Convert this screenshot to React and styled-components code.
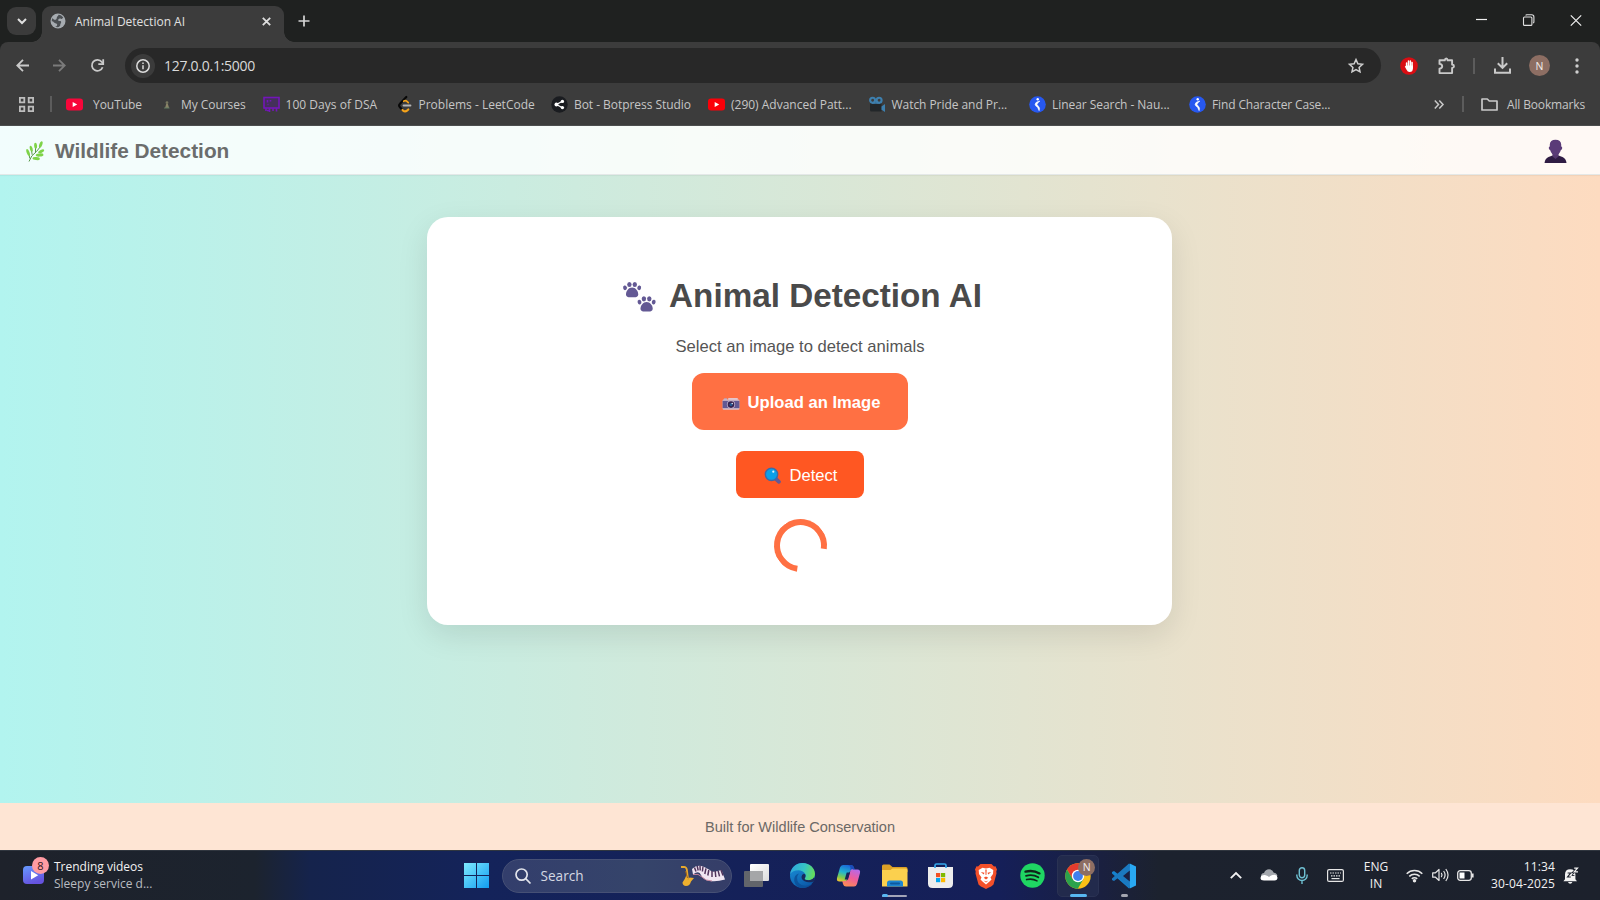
import React from 'react';
import styled, { createGlobalStyle } from 'styled-components';

const GlobalStyle = createGlobalStyle`
  * { box-sizing: border-box; }
  html, body { margin: 0; padding: 0; }
  body { width: 1600px; height: 900px; overflow: hidden; background: #1f2020; }
  svg { display: block; flex: none; overflow: visible; }
`;

const uiFont = '"Open Sans", "Noto Sans", sans-serif';
const pageFont = '"Liberation Sans", Arial, sans-serif';

const Screen = styled.div`
  display: flex;
  flex-direction: column;
  width: 1600px;
  height: 900px;
  overflow: hidden;
`;

/* ---------- Browser chrome ---------- */

const Browser = styled.div`
  display: flex;
  flex-direction: column;
  height: 126px;
  flex: none;
  background: #1f2120;
  font-family: ${uiFont};
  color: #c9c9c9;
`;

const TabStrip = styled.div`
  display: flex;
  align-items: flex-start;
  height: 42px;
  padding: 6px 0 0 7px;
`;

const TabMenuButton = styled.div`
  display: flex;
  align-items: center;
  justify-content: center;
  width: 29px;
  height: 28px;
  margin-top: 1px;
  border-radius: 9px;
  background: #3b3b3b;
`;

const Tab = styled.div`
  position: relative;
  display: flex;
  align-items: center;
  width: 242px;
  height: 36px;
  margin-left: 6px;
  padding: 0 13px 6px 8px;
  border-radius: 9px 9px 0 0;
  background: #3c3c3c;

  &::before,
  &::after {
    content: '';
    position: absolute;
    bottom: 0;
    width: 10px;
    height: 10px;
  }
  &::before {
    left: -10px;
    background: radial-gradient(circle at 0 0, transparent 9.5px, #3c3c3c 10px);
  }
  &::after {
    right: -10px;
    background: radial-gradient(circle at 100% 0, transparent 9.5px, #3c3c3c 10px);
  }
`;

const TabTitle = styled.span`
  flex: 1;
  margin-left: 9px;
  padding-top: 1px;
  font-size: 12px;
  line-height: 18px;
  color: #e0e0e0;
`;

const NewTab = styled.div`
  margin: 9px 0 0 14px;
`;

const WindowControls = styled.div`
  display: flex;
  align-items: center;
  gap: 35px;
  height: 28px;
  margin-left: auto;
  padding-right: 18px;
`;

const Panel = styled.div`
  flex: 1;
  border-radius: 8px 8px 0 0;
  border-bottom: 1px solid #4c4e4e;
  background: #3c3c3c;
`;

const Toolbar = styled.div`
  display: flex;
  align-items: center;
  height: 47px;
  padding: 0 9px 0 8px;
`;

const ToolButton = styled.div`
  display: flex;
  align-items: center;
  justify-content: center;
  width: 28px;
  height: 28px;
  margin-left: ${(p) => p.$gap || 0}px;
`;

const AddressBar = styled.div`
  display: flex;
  align-items: center;
  flex: 1;
  height: 35px;
  margin-left: 14px;
  padding: 0 17px 0 6px;
  border-radius: 18px;
  background: #282828;
`;

const SiteInfo = styled.div`
  display: flex;
  align-items: center;
  justify-content: center;
  width: 24px;
  height: 24px;
  border-radius: 50%;
  background: #3b3b3b;
`;

const Url = styled.span`
  flex: 1;
  margin-left: 9px;
  font-size: 14px;
  letter-spacing: -0.27px;
  color: #dadada;
`;

const Divider = styled.div`
  width: 2px;
  height: 16px;
  margin-left: ${(p) => p.$gap}px;
  background: #5c5c5c;
`;

const Avatar = styled.div`
  display: flex;
  align-items: center;
  justify-content: center;
  width: ${(p) => p.$size}px;
  height: ${(p) => p.$size}px;
  border-radius: 50%;
  background: #8d6e63;
  color: #f4eeec;
  font-family: ${uiFont};
  font-size: 10.5px;
`;

const BookmarkBar = styled.div`
  display: flex;
  align-items: center;
  height: 30px;
  padding: 0 15px 0 18px;
`;

const BookmarkList = styled.div`
  display: flex;
  flex: 1;
  margin-left: 14px;
`;

const Bookmark = styled.div`
  display: flex;
  align-items: center;
  gap: ${(p) => p.$gap}px;
  width: ${(p) => p.$width}px;
`;

const BookmarkLabel = styled.span`
  padding-top: 1px;
  font-size: 12px;
  line-height: 17px;
  letter-spacing: ${(p) => p.$spacing ?? -0.05}px;
  white-space: nowrap;
  color: #c6c6c6;
`;

const AllBookmarks = styled.div`
  display: flex;
  align-items: center;
  gap: 9px;
  margin-left: 17px;
`;

/* ---------- Web page ---------- */

const Page = styled.div`
  display: flex;
  flex-direction: column;
  height: 724px;
  flex: none;
  background: linear-gradient(to right, #b2f4ef, #fddbc0);
  font-family: ${pageFont};
`;

const PageHeader = styled.header`
  display: flex;
  align-items: center;
  justify-content: space-between;
  height: 49px;
  padding: 0 33px 0 26px;
  border-bottom: 1px solid rgba(225, 230, 229, 0.9);
  background: rgba(255, 255, 255, 0.83);
  box-shadow: 0 1px 1px rgba(0, 0, 0, 0.04);
`;

const Brand = styled.div`
  display: flex;
  align-items: center;
  gap: 10px;
  padding-top: 2px;
  font-size: 20.8px;
  font-weight: 700;
  line-height: 24px;
  color: #6b6d6c;
`;

const UserMenu = styled.div`
  padding-top: 1px;
`;

const Main = styled.main`
  display: flex;
  justify-content: center;
  align-items: flex-start;
  flex: 1;
  padding: 42px 1px 0 0;
`;

const Card = styled.section`
  display: flex;
  flex-direction: column;
  align-items: center;
  width: 745px;
  height: 408px;
  padding: 56px 0 0 1px;
  border-radius: 21px;
  background: #fff;
  box-shadow: 0 10px 31px rgba(0, 0, 0, 0.1);
`;

const Title = styled.h1`
  display: flex;
  align-items: center;
  gap: 13px;
  height: 46px;
  margin: 0;
  padding-left: 5px;
  font-size: 33.25px;
  color: #4a4a4a;
`;

const TitleIcon = styled.span`
  padding-top: 2px;
`;

const Hint = styled.p`
  height: 22px;
  margin: 17px 0 0;
  font-size: 16.6px;
  line-height: 22px;
  color: #555;
`;

const ActionButton = styled.button`
  display: flex;
  align-items: center;
  justify-content: center;
  gap: 8px;
  border: 0;
  font-family: inherit;
  font-size: 16.6px;
  color: #fff;
`;

const UploadButton = styled(ActionButton)`
  width: 216px;
  height: 57px;
  margin-top: 15px;
  padding: 2px 0 0 2px;
  border-radius: 12px;
  background: #ff7043;
  font-weight: 700;
`;

const DetectButton = styled(ActionButton)`
  width: 128px;
  height: 47px;
  margin-top: 21px;
  padding: 2px 0 0 1px;
  border-radius: 8px;
  background: #ff5722;
`;

const Spinner = styled.div`
  width: 53px;
  height: 53px;
  margin-top: 21px;
  border: 6px solid #ff7043;
  border-right-color: transparent;
  border-radius: 50%;
  transform: rotate(53deg);
`;

const PageFooter = styled.footer`
  display: flex;
  align-items: center;
  justify-content: center;
  height: 47px;
  background: #fee5d4;
  font-size: 14.55px;
  color: #6c6966;
`;

/* ---------- Taskbar ---------- */

const Taskbar = styled.div`
  display: flex;
  align-items: center;
  height: 50px;
  flex: none;
  padding: 0 21px 0 22px;
  border-top: 1px solid #30363f;
  background: linear-gradient(to right, #1e222b 0, #1c232e 255px, #15234c 310px, #14235a 480px, #151f58 1000px, #1a2040 1100px, #1c222e 1160px, #1c212c 100%);
  font-family: ${uiFont};
  font-size: 12px;
  color: #f2f2f2;
`;

const Widget = styled.div`
  display: flex;
  align-items: center;
  gap: 9px;
  width: 431px;
`;

const WidgetIcon = styled.div`
  position: relative;
  width: 23px;
  height: 26px;
  padding: 3px 0 0 1px;
`;

const WidgetBadge = styled.div`
  position: absolute;
  left: 10px;
  top: -6px;
  width: 17px;
  height: 17px;
  border-radius: 50%;
  background: #ff9ba3;
  color: #33171b;
  font-size: 11px;
  line-height: 17px;
  text-align: center;
`;

const TwoLines = styled.div`
  display: flex;
  flex-direction: column;
  align-items: ${(p) => p.$align || 'flex-start'};
  width: ${(p) => (p.$width ? `${p.$width}px` : 'auto')};
  margin-left: ${(p) => p.$gap || 0}px;
  padding-bottom: 2px;
  line-height: 17px;
  letter-spacing: ${(p) => p.$spacing || 0}px;
  white-space: nowrap;
`;

const Muted = styled.span`
  color: #b9bcc1;
`;

const StartButton = styled.div`
  width: 46px;
  display: flex;
  justify-content: center;
`;

const SearchBox = styled.div`
  display: flex;
  align-items: center;
  width: 230px;
  height: 34px;
  margin: 0 2.5px;
  padding: 0 5px 0 12px;
  border: 1px solid #465075;
  border-radius: 17px;
  background: linear-gradient(to right, #333e6c, #35446a 60%, #353d68);
`;

const SearchLabel = styled.span`
  flex: 1;
  margin-left: 10px;
  font-size: 13.6px;
  color: #d5d8e2;
`;

const AppSlot = styled.div`
  position: relative;
  display: flex;
  align-items: center;
  justify-content: center;
  width: 45.9px;
  height: 44px;
`;

const ActiveTile = styled.div`
  position: relative;
  display: flex;
  align-items: center;
  justify-content: center;
  width: 42px;
  height: 42px;
  border: 1px solid #2a3253;
  border-radius: 5px;
  background: #222a4c;
`;

const AppBadge = styled.div`
  position: absolute;
  right: 3px;
  top: 3px;
`;

const Indicator = styled.div`
  position: absolute;
  bottom: 1px;
  left: 50%;
  width: ${(p) => p.$width}px;
  height: ${(p) => p.$height || 3}px;
  margin-left: ${(p) => -p.$width / 2 + (p.$shift || 0)}px;
  border-radius: 2px;
  background: ${(p) => p.$color};
`;

const Tray = styled.div`
  display: flex;
  align-items: center;
  margin-left: auto;
`;

const TrayIcon = styled.div`
  display: flex;
  align-items: center;
  justify-content: ${(p) => (p.$end ? 'flex-end' : 'center')};
  width: ${(p) => p.$width}px;
  padding-bottom: 1px;
`;

/* ---------- Icons ---------- */

const Stroke = ({ w = 16, h = w, box, color = '#c9c9c9', sw = 1.8, children, ...rest }) => (
  <svg width={w} height={h} viewBox={box || `0 0 ${w} ${h}`} fill="none" stroke={color} strokeWidth={sw} {...rest}>
    {children}
  </svg>
);

const Globe = () => (
  <svg width="16" height="16" viewBox="0 0 16 16">
    <circle cx="8" cy="8" r="7.500" fill="#a6abb0" />
    <path d="M8.500 1.800C10.500 2 12 2.800 13.200 4.600c-.8 1.300-1.700 1.500-2.300 1.100-.9-.6-2-.3-2.600.7-.6 1 .5 1.500 1.600 1.500 1 0 1.500.6 1.200 1.600-.3 1.200-1.100 1.900-.9 3.200l-1.500 1.300Q6.500 14.400 5 13.700c1.700-.2 2.300-1 2.200-2.200-.1-1.400-2.200-1.100-3.200-2.100C3.200 8.500 2.600 8.300 1.700 8.300 1.700 7 2 5.900 2.600 5c.5 1.300 1.800 2 3 1.700 1.300-.3 1-1.600 1.300-2.500.3-.9 1.500-1 1.600-2.400z" fill="#4a4e52" />
  </svg>
);

const YouTube = ({ color }) => (
  <svg width="17" height="17" viewBox="0 0 17 17">
    <rect x="0" y="2.500" width="17" height="12" rx="3" fill={color} />
    <path d="M6.700 6v5l4.500-2.500z" fill="#fff" />
  </svg>
);

const Courses = () => (
  <svg width="17" height="17" viewBox="0 0 17 17">
    <circle cx="9" cy="6.700" r="1.400" fill="#77775f" />
    <path d="M7 12l1.200-4h1.700l1.200 4z" fill="#8a8468" />
    <path d="M6 12h5.500" stroke="#5f7a61" />
  </svg>
);

const DsaBoard = () => (
  <svg width="17" height="17" viewBox="0 0 17 17" fill="none" stroke="#7316b8" strokeWidth="1.600">
    <rect x="1" y="1.500" width="15" height="10.500" fill="#44305a" />
    <path d="M4.500 4v2.500M4.500 8.500h1M7.500 4v1.500M3 12v3M6.500 12v4M10 12v3M13.500 12v3.500M4 14.500h3" />
  </svg>
);

const LeetCode = () => (
  <svg width="17" height="17" viewBox="0 0 17 17" fill="none" strokeWidth="2.200" strokeLinecap="round">
    <path d="M9.300 1L3 7.800Q1.200 9.500 3 11.300L5 13.400" stroke="#080808" />
    <path d="M5.500 14l.5.500q2 1.800 4 .2l1.300-1.200" stroke="#f5a31a" />
    <path d="M6.700 5.200q1.700-1.200 3.300.2l1.300 1.200" stroke="#f5a31a" strokeWidth="1.600" />
    <path d="M6.500 9.500h7" stroke="#b5b5b5" strokeWidth="1.800" />
  </svg>
);

const Botpress = () => (
  <svg width="17" height="17" viewBox="0 0 17 17">
    <circle cx="8.500" cy="8.500" r="8.200" fill="#1a1c20" />
    <path d="M11.500 5.300L5.500 8.500l6 3.200" stroke="#fff" strokeWidth="1.300" fill="none" />
    <circle cx="5.400" cy="8.500" r="1.900" fill="#fff" />
    <circle cx="11.400" cy="5.400" r="1.700" fill="#fff" />
    <circle cx="11.400" cy="11.600" r="1.700" fill="#fff" />
  </svg>
);

const MovieCamera = () => (
  <svg width="17" height="17" viewBox="0 0 17 17">
    <path d="M1 7.500h11.500v8H2.500Q1 15.500 1 14z" fill="#222629" />
    <path d="M12.500 10.500L16 8v8l-3.500-2.300z" fill="#3d7fae" />
    <path d="M3 7h8" stroke="#3d7fae" strokeWidth="1.500" />
    <g fill="none" stroke="#3d7fae" strokeWidth="2.100">
      <circle cx="3.600" cy="4.300" r="2.500" />
      <circle cx="10.100" cy="4.300" r="2.500" />
    </g>
  </svg>
);

const Naukri = () => (
  <svg width="17" height="17" viewBox="0 0 17 17">
    <circle cx="8.500" cy="8.500" r="8.300" fill="#2758f0" />
    <circle cx="8.700" cy="3.300" r="1.200" fill="#fff" />
    <path d="M11 5Q6.200 5.800 6 8.300q.3 1.800 2.500 2.900l1.600 3.500q1.300-2.700-.7-4.500L8 8.500q.5-1.600 3-3.500z" fill="#fff" stroke="#fff" strokeWidth=".5" />
  </svg>
);

const Leaf = () => (
  <svg width="19" height="21" viewBox="0 0 19 21">
    <path d="M3 20.500Q4.800 14.500 10.500 10.500L14.500 5.500M3.800 17.500L3 13.500M6.200 13.800L5.500 9.500M9.500 11L9.500 6" stroke="#5a9a4c" strokeWidth="1" fill="none" />
    <g fill="#7ed348">
      <ellipse cx="14.800" cy="3.500" rx="1.500" ry="3.400" transform="rotate(20 14.800 3.500)" />
      <ellipse cx="9.600" cy="4.800" rx="1.500" ry="3" transform="rotate(-5 9.600 4.800)" />
      <ellipse cx="5.200" cy="7.700" rx="1.400" ry="3.100" transform="rotate(-16 5.200 7.700)" />
      <ellipse cx="2.100" cy="11.500" rx="1.400" ry="3.700" transform="rotate(-20 2.100 11.500)" />
      <ellipse cx="15.200" cy="10.300" rx="3.300" ry="1.500" transform="rotate(-25 15.200 10.300)" />
      <ellipse cx="13.600" cy="14" rx="3.900" ry="1.600" transform="rotate(-4 13.600 14)" />
      <ellipse cx="10.200" cy="17.600" rx="3.700" ry="1.500" transform="rotate(5 10.200 17.600)" />
    </g>
  </svg>
);

const Person = () => (
  <svg width="23" height="24" viewBox="0 0 23 24">
    <path d="M.5 24Q1 19.500 4.500 18l4-1.500h6l4 1.500q3.500 1.500 4 6z" fill="#2f1c44" />
    <path d="M8.500 14h6v3.500L11.500 20l-3-2.500z" fill="#54376f" />
    <path d="M5.800 5.500Q6 .7 11.500.7t5.700 4.800v2q1.200 0 1 1.800-.2 1.500-1.300 1.700-1.600 5.200-5.400 5.600-3.800-.4-5.400-5.600Q5 10.800 4.800 9.300q-.2-1.800 1-1.800z" fill="#5a3b78" />
  </svg>
);

const Paw = ({ x, y }) => (
  <g transform={`translate(${x} ${y})`}>
    <ellipse cx="2" cy="5.800" rx="1.900" ry="2.400" transform="rotate(-15 2 5.800)" />
    <ellipse cx="6.400" cy="2.500" rx="2.200" ry="2.600" />
    <ellipse cx="11.800" cy="2.500" rx="2.200" ry="2.600" />
    <ellipse cx="16.200" cy="5.800" rx="1.900" ry="2.400" transform="rotate(15 16.200 5.800)" />
    <path d="M9.100 5.600c3.500 0 6.100 3.600 6.100 6.600 0 2.900-2.600 3.100-6.100 3.100S3 15.100 3 12.200c0-3 2.600-6.600 6.100-6.600z" />
  </g>
);

const PawPrints = () => (
  <svg width="33" height="30" viewBox="0 0 33 30" fill="#635994">
    <Paw x="0" y="0" />
    <Paw x="14.500" y="14.300" />
  </svg>
);

const Camera = () => (
  <svg width="18" height="18" viewBox="0 0 18 18">
    <rect x="1.800" y="4.300" width="3.500" height="2" rx=".8" fill="#b9a9c2" />
    <rect x="6" y="4" width="10" height="2" rx="1" fill="#e4c5cb" />
    <rect x=".6" y="5.400" width="16.800" height="10.300" rx="1" fill="#d9c0ca" />
    <rect x=".6" y="6.800" width="16.800" height="7.400" fill="#635994" />
    <circle cx="9" cy="10.600" r="4.100" fill="#c3b3cc" />
    <circle cx="9" cy="10.600" r="3.300" fill="#37214f" />
    <circle cx="9" cy="10.600" r="1.600" fill="#26568f" />
    <circle cx="10.200" cy="9.500" r=".7" fill="#fff" />
  </svg>
);

const Magnifier = () => (
  <svg width="18" height="18" viewBox="0 0 18 18">
    <path d="M11.500 11.500l3.500 3.300" stroke="#635994" strokeWidth="3.800" strokeLinecap="round" />
    <circle cx="7.500" cy="7.300" r="6.200" fill="#0ba0e8" stroke="#3c6aa8" strokeWidth="1.400" />
    <circle cx="9.300" cy="4.700" r="1.100" fill="#d9f3ff" />
  </svg>
);

const WindowsLogo = () => (
  <svg width="25" height="25" viewBox="0 0 25 25">
    <defs>
      <linearGradient id="win" x1="0" y1="0" x2="1" y2="1">
        <stop offset="0" stopColor="#7eeaff" />
        <stop offset="1" stopColor="#119cf0" />
      </linearGradient>
    </defs>
    <path fill="url(#win)" d="M0 0h12v12H0zM13 0h12v12H13zM0 13h12v12H0zM13 13h12v12H13z" />
  </svg>
);

const PlayTile = () => (
  <svg width="21" height="18" viewBox="0 0 21 18">
    <defs>
      <linearGradient id="play" x1="0" y1="0" x2=".4" y2="1">
        <stop offset="0" stopColor="#679bff" />
        <stop offset="1" stopColor="#6653df" />
      </linearGradient>
    </defs>
    <rect width="21" height="18" rx="4" fill="url(#play)" />
    <path d="M8 5v8.500l7.200-4.200z" fill="#fff" />
  </svg>
);

const MusicArt = () => (
  <svg width="46" height="22" viewBox="0 0 46 22">
    <path d="M1 2l3-.2q2.300.2 2.800 2.700L8 14" stroke="#e8a92c" strokeWidth="1.800" fill="none" />
    <path d="M6.500 10Q5 14 2.500 17.500q.2 3.200 3.500 3.500 3.800 0 5-4.500l3-3.500-4.500-.5-1.500 2z" fill="#eeb02e" />
    <path d="M5.500 6l2 7" stroke="#9a6220" strokeWidth="1" />
    <path d="M12 4Q17-1 23 1.500T31 6t10.500-1L45 14.500Q37 17 30 16t-9-6-8-.5z" fill="#f1e6f2" />
    <path d="M14.500 2.500l1.500 4M17.200 1l1 4.500M20 .600L20.200 5.500M23 1.500l-.6 5M26 3.300L24.800 9M28.800 5l-1 5.500M32 6v6M35.200 6l.6 6M38.200 5.800l1.300 5.500M41 5l2 5.500" stroke="#51345c" strokeWidth="1.500" />
    <path d="M13 9.500q5.500-1.500 9 2.500t10 4" stroke="#c4859d" strokeWidth="1" fill="none" />
  </svg>
);

const TaskView = () => (
  <svg width="25" height="23" viewBox="0 0 25 23">
    <defs>
      <linearGradient id="tv" x1="0" y1="0" x2="1" y2="1">
        <stop offset="0" stopColor="#fff" />
        <stop offset="1" stopColor="#dcdcdc" />
      </linearGradient>
    </defs>
    <rect x="6" width="19" height="17" rx="1" fill="url(#tv)" />
    <rect y="7" width="19" height="16" rx="1" fill="#62656b" />
    <rect x="6" y="7" width="13" height="10" fill="#a5a6a8" />
  </svg>
);

const Edge = () => (
  <svg width="25" height="25" viewBox="0 0 24 24">
    <defs>
      <linearGradient id="edgeTop" x1="0" y1=".3" x2="1" y2=".5">
        <stop offset="0" stopColor="#2fa6dc" />
        <stop offset=".55" stopColor="#36c5c4" />
        <stop offset="1" stopColor="#66dd58" />
      </linearGradient>
      <linearGradient id="edgeLow" x1="0" y1="0" x2=".6" y2="1">
        <stop offset="0" stopColor="#1b94dc" />
        <stop offset="1" stopColor="#0b59a8" />
      </linearGradient>
    </defs>
    <circle cx="12" cy="12" r="12" fill="url(#edgeLow)" />
    <path d="M.2 10.500C1.200 4.200 6 0 12 0c7 0 12 5 12 10.500 0 3.700-2.800 6-6.200 6-2.600 0-4-.9-3.700-1.700 1.200-1.200 1.300-2.700.7-4C13.500 8.200 10.500 7 8 7 4.500 7 1.500 8.500.2 10.500z" fill="url(#edgeTop)" />
    <path d="M8.500 10q-3.500 4.500 0 9.500 5 4.500 13 .3Q17.500 24 12 24 5.500 23.500 4 17q-.2-5.500 4.500-7z" fill="#0c4f98" opacity=".85" />
    <path d="M14.100 14.800c-.3.800 1.100 1.700 3.700 1.700 2 0 4-.8 5.200-2.500l1 1-1.300 2.700q-4.700 1.700-8.700-.2-3.200-1.800-2.900-4.600.3-2.200 2.200-2.700 1.300.2 1.500 1.200.2 1.700-.7 3.400z" fill="#182a5b" />
  </svg>
);

const Copilot = () => (
  <svg width="25" height="23" viewBox="0 0 25 23">
    <defs>
      <linearGradient id="cpA" x1=".6" y1="0" x2=".3" y2="1">
        <stop offset="0" stopColor="#1a66d8" />
        <stop offset=".45" stopColor="#22b4d0" />
        <stop offset=".75" stopColor="#7dca50" />
        <stop offset="1" stopColor="#f3c530" />
      </linearGradient>
      <linearGradient id="cpB" x1=".7" y1="0" x2=".3" y2="1">
        <stop offset="0" stopColor="#b569ea" />
        <stop offset=".5" stopColor="#ee5d9c" />
        <stop offset="1" stopColor="#fb8c55" />
      </linearGradient>
    </defs>
    <path d="M7 1h8q2.300 0 3 2.500l.7 3h-3q-2 0-2.700 2.500L10.500 17Q9.700 19 7.500 17.500H3.500Q.3 17.500 1 14L4 3.500Q4.800 1 7 1z" fill="url(#cpA)" />
    <path d="M18 22.500h-8q-2.300 0-3-2.500L6.300 17h3q2 0 2.700-2.500l2.500-8q.8-2.500 3-1h4q3.200 0 2.500 3.500L21 20q-.8 2.500-3 2.500z" fill="url(#cpB)" />
    <path d="M14.500 6.500q.8-2.500 3-1h1L18 3.500Q17.300 1 15 1h-3q2 0 2.500 2.500z" fill="#1c4cb8" />
    <path d="M10.700 8.500h3.300L12 15.500H8.700z" fill="#172258" />
  </svg>
);

const Explorer = () => (
  <svg width="26" height="24" viewBox="0 0 26 24">
    <path d="M0 2q0-1.500 1.500-1.500h6L10.500 3H24q1.500 0 1.500 1.500V8H0z" fill="#dca026" />
    <path d="M0 6h8.500l2-1.500H24q1.500 0 1.500 1.500v16.500H0z" fill="#fbd04e" />
    <path d="M5 22.500V19q0-2.500 2.500-2.500h11q2.500 0 2.500 2.500v3.500z" fill="#1c86d2" />
    <rect x="8" y="18.500" width="10" height="2" rx="1" fill="#0e5a9e" />
  </svg>
);

const Store = () => (
  <svg width="25" height="25" viewBox="0 0 25 25">
    <path d="M0 4h25v16.500Q25 25 20.500 25h-16Q0 25 0 20.500z" fill="#ededed" />
    <path d="M7 5V2.500Q7 1 8.500 1h8Q18 1 18 2.500V5" stroke="#36a8ea" strokeWidth="1.700" fill="none" />
    <path d="M8 10h4.200v4.200H8z" fill="#f25022" />
    <path d="M13 10h4.200v4.200H13z" fill="#7fba00" />
    <path d="M8 15h4.200v4.200H8z" fill="#00a4ef" />
    <path d="M13 15h4.200v4.200H13z" fill="#ffb900" />
  </svg>
);

const Brave = () => (
  <svg width="22" height="26" viewBox="0 0 22 26">
    <path d="M5.500 1h11L19 3.500l1.500-.2L22 6.500l-.7 2 .2 2-3 11Q17.500 23 11 26q-6.500-3-7.500-4.500l-3-11 .2-2L0 6.500l1.500-3.200 1.500.2z" fill="#f4502a" />
    <path d="M11 5.500l3.500-.8L18.300 7 18 11l-2.500 3.500 1 2-2 2L11 21.500l-3.500-3-2-2 1-2L4 11l-.3-4 3.800-2.300z" fill="#fff" />
    <path d="M5.800 9l3.700.8-.8 1.800zM16.200 9l-3.700.8.8 1.800zM8.700 14.800L11 13.500l2.300 1.300L11 16.500zM8.500 17.500l2.500 1 2.500-1-2.500 2zM10.300 6.500h1.400L11.400 12h-.8z" fill="#f4502a" />
  </svg>
);

const Spotify = () => (
  <svg width="25" height="25" viewBox="0 0 25 25" fill="none" stroke="#10241a" strokeLinecap="round">
    <circle cx="12.500" cy="12.500" r="12.200" fill="#1fd663" stroke="none" />
    <path d="M5.500 8.700q7.500-2 14 1.700" strokeWidth="2.300" />
    <path d="M6 12.800q6.800-1.800 12.300 1.500" strokeWidth="1.900" />
    <path d="M6.600 16.600q5.600-1.500 10.400 1.300" strokeWidth="1.600" />
  </svg>
);

const Chrome = () => (
  <svg width="26" height="26" viewBox="0 0 26 26">
    <circle cx="13" cy="13" r="12.700" fill="#fbc116" />
    <path d="M13 6.800H24.200A12.700 12.700 0 0 0 2 6.600L7.600 16.100 13 13z" fill="#e33b2e" />
    <path d="M2 6.600A12.700 12.700 0 0 0 12.800 25.700L18.400 16.100 13 13 7.600 16.100z" fill="#2ba24c" />
    <circle cx="13" cy="13" r="6.200" fill="#fff" />
    <circle cx="13" cy="13" r="4.900" fill="#3f80ee" />
  </svg>
);

const VsCode = () => (
  <svg width="26" height="26" viewBox="0 0 26 26">
    <path d="M18.800.5L7.500 11.500 3 8 1 9v1.500L18 25.500l1-7z" fill="#1482cf" />
    <path d="M18.800 25.500L7.500 14.500 3 18l-2-1v-1.500L18 .5l1 7z" fill="#1b79c0" />
    <path d="M18.800.5L25 3.500v19l-6.200 3z" fill="#29a8f3" />
    <path d="M18.800 7.500v11L12 13z" fill="#1a2144" />
  </svg>
);

const Cloud = () => (
  <svg width="18" height="12" viewBox="0 0 18 12">
    <path d="M1 7.500Q1 4 4 4 5.500.3 9 .3t4.800 3.500Q17 4 17.400 7z" fill="#a3a7ad" />
    <path d="M4 11.500Q.5 11.500.5 9T3 6.300q2-.7 4 .4l2 .8 3.500-1.500 2.300-.2Q17.500 6.300 17.500 8.700t-3 2.800z" fill="#fff" />
  </svg>
);

const Bell = () => (
  <svg width="16" height="17" viewBox="0 0 16 17">
    <path d="M2 12.200V7.500Q2 2.300 7.200 2.300T12.400 7.500v4.700l1.600 2H.4zM5 15h4.400q-.5 1.800-2.200 1.800T5 15z" fill="#f2f2f2" />
    <path d="M4.600 6h3L4.600 10h3.200" stroke="#1c212c" strokeWidth="1.200" fill="none" />
    <path d="M8.900 5.500h2.300L8.900 8.500h2.500" stroke="#1c212c" strokeWidth=".9" fill="none" />
    <path d="M11 1.200h3.700L11 5h3.800" stroke="#1c212c" strokeWidth="2.600" fill="none" />
    <path d="M11.200 1.200h3.300L11.200 4.800h3.800" stroke="#f2f2f2" strokeWidth="1.200" fill="none" />
  </svg>
);

const bookmarks = [
  { label: 'YouTube', icon: <YouTube color="#f8063a" />, width: 92, gap: 10 },
  { label: 'My Courses', icon: <Courses />, width: 104.5, gap: 6 },
  { label: '100 Days of DSA', icon: <DsaBoard />, width: 134, gap: 6, spacing: 0.03 },
  { label: 'Problems - LeetCode', icon: <LeetCode />, width: 154.500, gap: 5, spacing: 0 },
  { label: 'Bot - Botpress Studio', icon: <Botpress />, width: 157, gap: 6 },
  { label: '(290) Advanced Patt...', icon: <YouTube color="#fb0008" />, width: 160.5, gap: 6, spacing: 0 },
  { label: 'Watch Pride and Pr...', icon: <MovieCamera />, width: 160.5, gap: 6 },
  { label: 'Linear Search - Nau...', icon: <Naukri />, width: 160, gap: 6 },
  { label: 'Find Character Case...', icon: <Naukri />, width: 160, gap: 6, spacing: -0.13 },
];

const pinnedApps = [
  { id: 'tasks', icon: <TaskView /> },
  { id: 'edge', icon: <Edge /> },
  { id: 'copilot', icon: <Copilot /> },
  { id: 'files', icon: <Explorer /> },
  { id: 'store', icon: <Store /> },
  { id: 'brave', icon: <Brave /> },
  { id: 'spotify', icon: <Spotify /> },
];

function BrowserChrome() {
  return (
    <Browser>
      <TabStrip>
        <TabMenuButton>
          <Stroke w={10} h={6} sw={2} color="#e0e0e0"><path d="M1 1l4 4 4-4" /></Stroke>
        </TabMenuButton>
        <Tab>
          <Globe />
          <TabTitle>Animal Detection AI</TabTitle>
          <Stroke w={9} sw={1.8} color="#dedede"><path d="M.8.8l7.400 7.400M8.200.8L.8 8.200" /></Stroke>
        </Tab>
        <NewTab>
          <Stroke w={12} sw={1.700} color="#d5d5d5"><path d="M6 .5v11M.5 6h11" /></Stroke>
        </NewTab>
        <WindowControls>
          <Stroke w={12} sw={1.200} color="#f0f0f0"><path d="M0 5.500h11" /></Stroke>
          <Stroke w={12} sw={1.100} color="#e0e0e0">
            <rect x=".5" y="3" width="8.400" height="8.400" rx="1" />
            <path d="M2.700 1.500Q3 .8 3.700.8h5q2.200 0 2.200 2.200v5q0 .8-.8 1" />
          </Stroke>
          <Stroke w={12} sw={1.200} color="#f0f0f0"><path d="M.8 1.300l10.400 10.400M11.200 1.300L.8 11.700" /></Stroke>
        </WindowControls>
      </TabStrip>
      <Panel>
        <Toolbar>
          <ToolButton>
            <Stroke w={13}><path d="M13 6.500H1.500M7 .8L1.300 6.500 7 12.200" /></Stroke>
          </ToolButton>
          <ToolButton $gap={9}>
            <Stroke w={13} color="#7b7b7b"><path d="M0 6.500h11.500M6 .8l5.700 5.700L6 12.200" /></Stroke>
          </ToolButton>
          <ToolButton $gap={10}>
            <Stroke w={13}>
              <path d="M11.600 8.200A5.500 5.500 0 1 1 10.800 3L12 4.500" />
              <path d="M12.200.3v4.900H7.300" />
            </Stroke>
          </ToolButton>
          <AddressBar>
            <SiteInfo>
              <Stroke w={14} sw={1.500} color="#dcdcdc">
                <circle cx="7" cy="7" r="6.200" />
                <path d="M7 6.200v4M7 3.600v1.500" />
              </Stroke>
            </SiteInfo>
            <Url>127.0.0.1:5000</Url>
            <Stroke w={16} sw={1.500} color="#cfcfcf">
              <path d="M8 1.600l1.900 4.200 4.600.5-3.400 3.100.9 4.500L8 11.600l-4 2.300.9-4.500L1.500 6.300l4.600-.5z" />
            </Stroke>
          </AddressBar>
          <ToolButton $gap={14}>
            <svg width="18" height="18" viewBox="0 0 18 18">
              <circle cx="9" cy="9" r="8.800" fill="#d90d13" />
              <path d="M6.600 6v4M8.500 4v6M10.400 4v6M12.100 5.500V11" stroke="#fff" strokeWidth="1.500" strokeLinecap="round" />
              <path d="M5.900 8.500h7v3q0 3.500-3.300 3.500-2 0-3.200-2.500l-1.600-3q.3-.7 1.100-.3z" fill="#fff" />
            </svg>
          </ToolButton>
          <ToolButton $gap={10}>
            <Stroke w={18} sw={1.900}>
              <path d="M1.500 3.300h5.300q.2-1.800 1.400-1.800t1.400 1.800h4.500v4.200q1.900.3 1.900 1.700t-1.900 1.700v5.200H1.500v-4.300q2.700-.6 2.700-2.600T1.500 6.900z" strokeLinejoin="round" />
            </Stroke>
          </ToolButton>
          <Divider $gap={12} />
          <ToolButton $gap={13}>
            <Stroke w={17} sw={2}><path d="M8.500 0v10.500M3.800 6.200l4.700 4.700 4.700-4.700M1 11.500V15.800h15V11.500" /></Stroke>
          </ToolButton>
          <ToolButton $gap={9.5}><Avatar $size={21}>N</Avatar></ToolButton>
          <ToolButton $gap={9.5}>
            <svg width="4" height="16" viewBox="0 0 4 16" fill="#cfcfcf">
              <circle cx="2" cy="2" r="1.700" /><circle cx="2" cy="8" r="1.700" /><circle cx="2" cy="14" r="1.700" />
            </svg>
          </ToolButton>
        </Toolbar>
        <BookmarkBar>
          <Stroke w={17} sw={1.800} color="#bdbdbd">
            <path d="M1.900 1.900h4.400v4.400H1.900zM10.700 1.900h4.400v4.400h-4.400zM1.900 10.700h4.400v4.400H1.900zM10.700 10.700h4.400v4.400h-4.400z" />
          </Stroke>
          <Divider $gap={15} />
          <BookmarkList>
            {bookmarks.map((b) => (
              <Bookmark key={b.label} $width={b.width} $gap={b.gap}>
                {b.icon}
                <BookmarkLabel $spacing={b.spacing}>{b.label}</BookmarkLabel>
              </Bookmark>
            ))}
          </BookmarkList>
          <Stroke w={10} h={9} sw={1.500}><path d="M.8.600L4.500 4.500.8 8.400M5.300.600L9 4.500 5.300 8.400" /></Stroke>
          <Divider $gap={18} />
          <AllBookmarks>
            <Stroke w={17} h={13} sw={1.700}><path d="M1 1h5.300l2 2H16v9H1z" strokeLinejoin="round" /></Stroke>
            <BookmarkLabel $spacing={-0.15}>All Bookmarks</BookmarkLabel>
          </AllBookmarks>
        </BookmarkBar>
      </Panel>
    </Browser>
  );
}

function WebPage() {
  return (
    <Page>
      <PageHeader>
        <Brand><Leaf />Wildlife Detection</Brand>
        <UserMenu><Person /></UserMenu>
      </PageHeader>
      <Main>
        <Card>
          <Title><TitleIcon><PawPrints /></TitleIcon>Animal Detection AI</Title>
          <Hint>Select an image to detect animals</Hint>
          <UploadButton><Camera />Upload an Image</UploadButton>
          <DetectButton><Magnifier />Detect</DetectButton>
          <Spinner />
        </Card>
      </Main>
      <PageFooter>Built for Wildlife Conservation</PageFooter>
    </Page>
  );
}

function DesktopTaskbar() {
  return (
    <Taskbar>
      <Widget>
        <WidgetIcon>
          <PlayTile />
          <WidgetBadge>8</WidgetBadge>
        </WidgetIcon>
        <TwoLines>
          <span>Trending videos</span>
          <Muted>Sleepy service d...</Muted>
        </TwoLines>
      </Widget>
      <StartButton><WindowsLogo /></StartButton>
      <SearchBox>
        <Stroke w={16} sw={1.700} color="#e3e5ec"><circle cx="6.600" cy="6.600" r="5.600" /><path d="M10.700 10.700l4.800 4.800" /></Stroke>
        <SearchLabel>Search</SearchLabel>
        <MusicArt />
      </SearchBox>
      {pinnedApps.map((app) => (
        <AppSlot key={app.id}>
          {app.icon}
          {app.id === 'files' && (
            <>
              <Indicator $width={25} $height={2} $color="#a3a5b8" />
              <Indicator $width={6} $shift={-10} $color="#58b7f2" />
            </>
          )}
        </AppSlot>
      ))}
      <AppSlot>
        <ActiveTile>
          <Chrome />
          <AppBadge><Avatar $size={17}>N</Avatar></AppBadge>
        </ActiveTile>
        <Indicator $width={17} $color="#58b7f2" />
      </AppSlot>
      <AppSlot>
        <VsCode />
        <Indicator $width={7} $color="#a3a5b0" />
      </AppSlot>
      <Tray>
        <TrayIcon $width={33}>
          <Stroke w={12} h={7} color="#f2f2f2"><path d="M.8 6.200L6 1l5.200 5.200" /></Stroke>
        </TrayIcon>
        <TrayIcon $width={33}><Cloud /></TrayIcon>
        <TrayIcon $width={33}>
          <Stroke w={12} h={17} sw={1.400} color="#6fc0d2">
            <rect x="3.300" y=".8" width="5.400" height="10" rx="2.700" />
            <path d="M.8 7.500v.8a5.200 5.200 0 0 0 10.400 0v-.8M6 13.500V17" />
          </Stroke>
        </TrayIcon>
        <TrayIcon $width={34}>
          <Stroke w={17} h={13} sw={1.200} color="#e6e6e6">
            <rect x=".6" y=".6" width="15.800" height="11.800" rx="1.500" />
            <path d="M3 4h11M4 6.800h10" strokeDasharray="1.500 1" />
            <path d="M4.500 9.600h8" />
          </Stroke>
        </TrayIcon>
        <TwoLines $align="center" $gap={2} $width={44}>
          <span>ENG</span>
          <span>IN</span>
        </TwoLines>
        <TrayIcon $width={33}>
          <Stroke w={17} h={13} sw={1.500} color="#e6e6e6">
            <path d="M.7 4.800a11 11 0 0 1 15.600 0M3.300 7.400a7.300 7.300 0 0 1 10.400 0M5.800 9.900a3.800 3.800 0 0 1 5.400 0" />
            <circle cx="8.500" cy="11.800" r="1" fill="#fff" />
          </Stroke>
        </TrayIcon>
        <TrayIcon $width={18}>
          <Stroke w={17} h={14} sw={1.200} color="#e6e6e6">
            <path d="M.7 4.800h2.800L7 1.500v11L3.500 9.200H.7z" strokeLinejoin="round" />
            <path d="M9.300 4.800q1.500 2.200 0 4.400M11.600 3q3 4 0 8M13.800 1q4.500 6 0 12" />
          </Stroke>
        </TrayIcon>
        <TrayIcon $width={33}>
          <Stroke w={17} h={11} sw={1.300} color="#e6e6e6">
            <rect x=".7" y=".7" width="13.600" height="9.600" rx="2.500" />
            <rect x="2.500" y="2.500" width="5" height="6" fill="#fff" stroke="none" />
            <path d="M15.700 3.500v4" strokeWidth="1.800" />
          </Stroke>
        </TrayIcon>
        <TwoLines $align="flex-end" $gap={8} $width={65} $spacing={0.15}>
          <span>11:34</span>
          <span>30-04-2025</span>
        </TwoLines>
        <TrayIcon $width={24} $end><Bell /></TrayIcon>
      </Tray>
    </Taskbar>
  );
}

export default function App() {
  return (
    <Screen>
      <GlobalStyle />
      <BrowserChrome />
      <WebPage />
      <DesktopTaskbar />
    </Screen>
  );
}
